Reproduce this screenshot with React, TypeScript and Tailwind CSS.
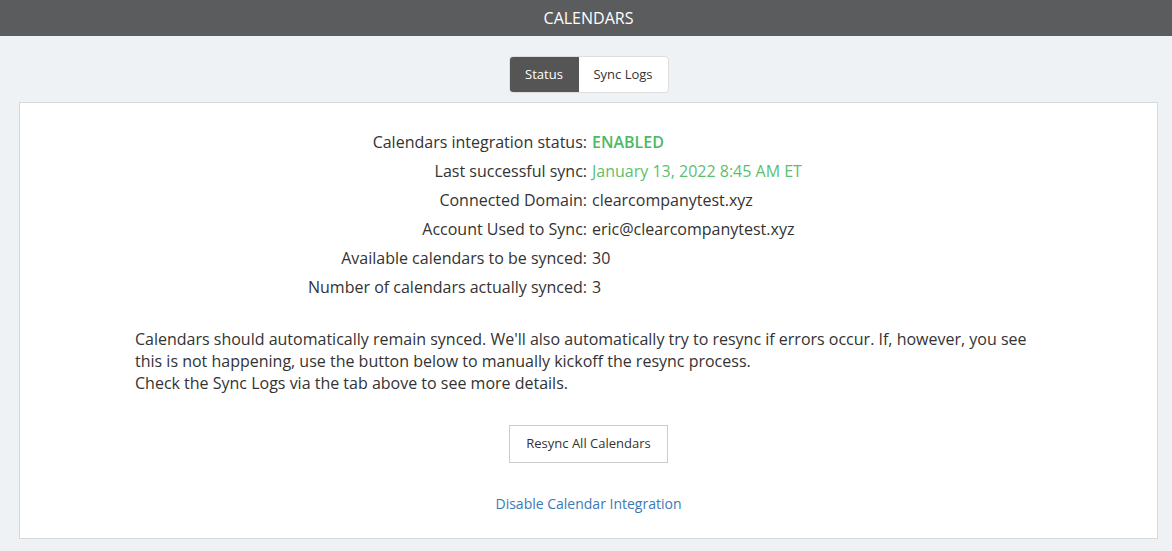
import React from "react";

const rows: { label: string; value: string; tone?: "strong" | "green" }[] = [
  { label: "Calendars integration status:", value: "ENABLED", tone: "strong" },
  { label: "Last successful sync:", value: "January 13, 2022 8:45 AM ET", tone: "green" },
  { label: "Connected Domain:", value: "clearcompanytest.xyz" },
  { label: "Account Used to Sync:", value: "eric@clearcompanytest.xyz" },
  { label: "Available calendars to be synced:", value: "30" },
  { label: "Number of calendars actually synced:", value: "3" },
];

export default function App() {
  return (
    <div
      className="min-h-[551px] bg-[#eef2f5] text-[#333]"
      style={{ fontFamily: '"Open Sans", "Noto Sans", sans-serif' }}
    >
      <header className="flex h-[36px] items-center justify-center bg-[#5b5c5e] pl-[5px] text-[16px] text-white">
        CALENDARS
      </header>

      <div className="flex justify-center pt-[20px] pb-[9px] pl-[5px]">
        <div className="flex h-[37px] rounded-[4px] border border-[#ddd] bg-white text-[13px]">
          <button className="flex w-[69px] items-center justify-center rounded-l-[3px] bg-[#555] text-white">
            Status
          </button>
          <button className="flex w-[89px] items-center justify-center text-[#333]">
            Sync Logs
          </button>
        </div>
      </div>

      <main className="ml-[19px] mr-[14px] border border-[#d8d8d8] bg-white px-[115px] pt-[25px] pb-[24px]">
        <div className="grid grid-cols-[452px_1fr] gap-x-[5px] text-[16px] leading-[29px]">
          {rows.map((r) => (
            <React.Fragment key={r.label}>
              <div className="text-right">{r.label}</div>
              <div
                className={
                  r.tone === "strong"
                    ? "font-semibold text-[#4cb963]"
                    : r.tone === "green"
                    ? "text-[#5cbf6e]"
                    : ""
                }
              >
                {r.value}
              </div>
            </React.Fragment>
          ))}
        </div>

        <p className="mt-[26px] max-w-[905px] text-[16px] leading-[22px]">
          Calendars should automatically remain synced. We'll also automatically try to resync if
          errors occur. If, however, you see this is not happening, use the button below to
          manually kickoff the resync process.
          <br />
          Check the Sync Logs via the tab above to see more details.
        </p>

        <div className="mt-[31px] flex flex-col items-center">
          <button className="h-[38px] w-[159px] border border-[#ccc] bg-white text-[13px] text-[#333]">
            Resync All Calendars
          </button>
          <a className="mt-[30px] text-[14px] text-[#3a79b8]" href="#">
            Disable Calendar Integration
          </a>
        </div>
      </main>
    </div>
  );
}
